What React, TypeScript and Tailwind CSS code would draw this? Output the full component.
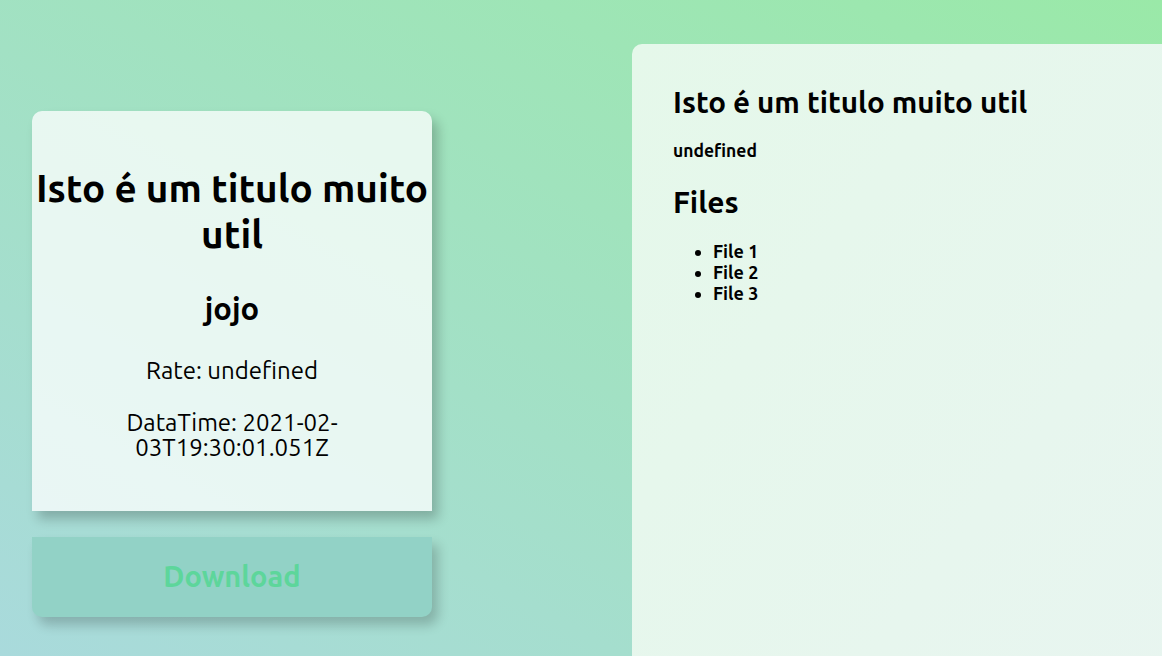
import React from "react";

const files = ["File 1", "File 2", "File 3"];

function InfoCard() {
  return (
    <div className="flex w-[400px] flex-col">
      <div className="flex h-[400px] flex-col items-center rounded-t-[10px] bg-white/75 pt-[54px] text-center text-black shadow-[6px_8px_12px_rgba(0,0,0,0.22)]">
        <h1 className="text-[38.7px] font-bold leading-[46px]">Isto é um titulo muito util</h1>
        <h2 className="mt-[33px] text-[31px] font-bold leading-[37px]">jojo</h2>
        <p className="mt-[30px] text-[24px] leading-[28px]">Rate: undefined</p>
        <p className="mt-[25px] text-[24px] leading-[25px]">
          DataTime: 2021-02-<br />03T19:30:01.051Z
        </p>
      </div>
      <button
        type="button"
        className="mt-[26px] flex h-[80px] items-center justify-center rounded-b-[10px] bg-[#92d2c6] text-[29px] font-bold text-[#5dd69b] shadow-[6px_8px_12px_rgba(0,0,0,0.2)]"
      >
        Download
      </button>
    </div>
  );
}

function DetailPanel() {
  return (
    <div className="ml-[200px] mt-[44px] min-h-[700px] flex-1 rounded-tl-[10px] bg-[linear-gradient(to_bottom_right,#e5f8ea,#e8f5f0)] pl-[41px] pt-[38px] text-black">
      <h1 className="text-[29.6px] font-bold leading-[40px]">Isto é um titulo muito util</h1>
      <p className="mt-[17px] text-[17.5px] font-bold leading-[24px]">undefined</p>
      <h2 className="mt-[19px] text-[30px] font-bold leading-[40px]">Files</h2>
      <ul className="mt-[19px] list-disc pl-[40px] text-[18px] font-bold leading-[21px]">
        {files.map(f => (
          <li key={f}>{f}</li>
        ))}
      </ul>
    </div>
  );
}

export default function App() {
  return (
    <div
      className="flex h-screen w-full overflow-hidden bg-[linear-gradient(to_top_right,#a9dadc,#9ae9a8)] pl-8"
      style={{ fontFamily: "Ubuntu, 'Open Sans', 'Noto Sans', sans-serif" }}
    >
      <div className="pt-[111px]">
        <InfoCard />
      </div>
      <DetailPanel />
    </div>
  );
}
